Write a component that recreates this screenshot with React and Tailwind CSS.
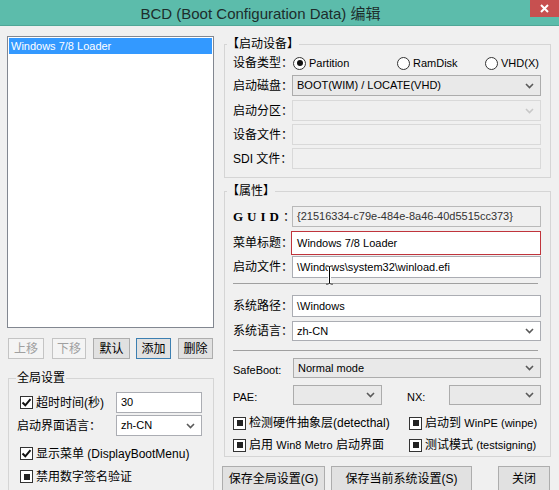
import React from "react";

function Chevron({ light }) {
  return (
    <svg width="9" height="6" viewBox="0 0 9 6" className="shrink-0">
      <path d="M1 1l3.5 3.5L8 1" fill="none" stroke={light ? "#c8c8c8" : "#5a5a5a"} strokeWidth="1.6" />
    </svg>
  );
}

function Check({ state }) {
  return (
    <div className="w-[13px] h-[13px] border border-[#333] bg-white flex items-center justify-center shrink-0">
      {state === "on" ? (
        <svg width="11" height="11" viewBox="0 0 11 11">
          <path d="M1.5 5.5l2.8 2.8L9.5 2.2" fill="none" stroke="#111" strokeWidth="2" />
        </svg>
      ) : (
        <div className="w-[6px] h-[6px] bg-[#222]" />
      )}
    </div>
  );
}

function Radio({ on }) {
  return (
    <div className="w-[13px] h-[13px] rounded-full border border-[#333] bg-white flex items-center justify-center shrink-0">
      {on && <div className="w-[6px] h-[6px] rounded-full bg-[#111]" />}
    </div>
  );
}

function Btn({ children, className, disabled, focus }) {
  const border = focus ? "border-[#3c7fb1]" : disabled ? "border-[#c4c4c4]" : "border-[#adadad]";
  const color = disabled ? "text-[#a0a0a0]" : "text-black";
  return (
    <div className={`${className} border ${border} ${color} ${disabled ? "bg-[#f4f4f4]" : "bg-[#e1e1e1]"} flex items-center justify-center`}>
      {children}
    </div>
  );
}

export default function App() {
  return (
    <div className="w-[559px] h-[490px] overflow-hidden bg-[#f0f0f0] text-black font-['Liberation_Sans','Noto_Sans_CJK_SC',sans-serif] text-[12px] leading-none whitespace-nowrap relative">
      {/* title bar */}
      <div className="h-[26px] bg-[#5cbcab] border-b border-[#4fa797] flex items-center justify-center pr-[38px] relative">
        <span className="text-[15px] text-[#1d2d2b] mt-[1px]">BCD (Boot Configuration Data) 编辑</span>
        <div className="absolute right-0 top-0 w-[29px] h-[17px] bg-[#c75050] flex items-center justify-center">
          <svg width="9" height="9" viewBox="0 0 9 9">
            <path d="M1 1l7 7M8 1l-7 7" stroke="#fff" strokeWidth="2" />
          </svg>
        </div>
      </div>

      <div className="flex">
        {/* left column */}
        <div className="w-[222px] shrink-0 pl-[7px] pt-[10px]">
          <div className="w-[207px] h-[292px] border border-[#828790] bg-white p-px">
            <div className="h-[16px] bg-[#3399ff] text-white text-[11px] flex items-center pl-[2px]">Windows 7/8 Loader</div>
          </div>

          <div className="flex mt-[10px] h-[21px]">
            <Btn className="ml-[1px] w-[36px]" disabled>上移</Btn>
            <Btn className="ml-[8px] w-[34px]" disabled>下移</Btn>
            <Btn className="ml-[7px] w-[37px]">默认</Btn>
            <Btn className="ml-[6px] w-[35px]" focus>添加</Btn>
            <Btn className="ml-[7px] w-[35px]">删除</Btn>
          </div>

          <fieldset className="ml-[1px] mt-[11px] w-[206px] h-[140px] border border-[#d5d5d5] pl-[11px] pt-[5px]">
            <legend className="ml-[-4px] leading-[17px] px-px">全局设置</legend>
            <div className="flex items-center h-[21px]">
              <div className="w-[96px] shrink-0 flex items-center gap-[3px]">
                <Check state="on" />
                <span>超时时间(秒)</span>
              </div>
              <div className="w-[86px] h-[21px] border border-[#abadb3] bg-white flex items-center pl-[4px] text-[11px]">30</div>
            </div>
            <div className="flex items-center h-[21px] mt-[2px]">
              <div className="w-[96px] shrink-0 ml-[-3px] mr-[3px]">启动界面语言：</div>
              <div className="w-[86px] h-[21px] border border-[#abadb3] bg-white flex items-center justify-between pl-[4px] pr-[6px] text-[11px]">
                <span>zh-CN</span>
                <Chevron />
              </div>
            </div>
            <div className="flex items-center h-[23px] mt-[6px] gap-[3px]">
              <Check state="on" />
              <span>显示菜单 (DisplayBootMenu)</span>
            </div>
            <div className="flex items-center h-[23px] gap-[3px]">
              <Check state="ind" />
              <span>禁用数字签名验证</span>
            </div>
          </fieldset>
        </div>

        {/* right column */}
        <div className="w-[337px]">
          <fieldset className="ml-[2px] mt-[10px] w-[327px] border border-[#d5d5d5] pl-[8px] pr-[9px] pb-[8px]">
            <legend className="ml-[-6px] leading-[17px]">【启动设备】</legend>
            <div className="flex items-center h-[20px]">
              <span className="w-[59px] shrink-0">设备类型：</span>
              <div className="ml-[1px] w-[104px] shrink-0 flex items-center gap-[3px]">
                <Radio on />
                <span className="text-[11px]">Partition</span>
              </div>
              <div className="w-[88px] shrink-0 flex items-center gap-[3px]">
                <Radio />
                <span className="text-[11px]">RamDisk</span>
              </div>
              <div className="flex items-center gap-[3px]">
                <Radio />
                <span className="text-[11px]">VHD(X)</span>
              </div>
            </div>
            <div className="flex items-center h-[21px] mt-[2px]">
              <span className="w-[59px] shrink-0">启动磁盘：</span>
              <div className="w-[249px] shrink-0 h-[21px] border border-[#acacac] bg-[#e9e9e9] flex items-center justify-between pl-[4px] pr-[6px] text-[11px]">
                <span>BOOT(WIM) / LOCATE(VHD)</span>
                <Chevron />
              </div>
            </div>
            <div className="flex items-center h-[21px] mt-[4px]">
              <span className="w-[59px] shrink-0">启动分区：</span>
              <div className="w-[249px] shrink-0 h-[21px] border border-[#d9d9d9] bg-[#efefef] flex items-center justify-end pr-[6px]">
                <Chevron light />
              </div>
            </div>
            <div className="flex items-center h-[21px] mt-[3px]">
              <span className="w-[59px] shrink-0">设备文件：</span>
              <div className="w-[249px] shrink-0 h-[21px] border border-[#d9d9d9] bg-[#f0f0f0]" />
            </div>
            <div className="flex items-center h-[21px] mt-[3px]">
              <span className="w-[59px] shrink-0">SDI 文件：</span>
              <div className="w-[249px] shrink-0 h-[21px] border border-[#d9d9d9] bg-[#f0f0f0]" />
            </div>
          </fieldset>

          <fieldset className="ml-[2px] mt-[5px] w-[327px] border border-[#d5d5d5] pl-[8px] pr-[9px] pb-[2px]">
            <legend className="ml-[-6px] leading-[17px]">【属性】</legend>
            <div className="flex items-center h-[21px] mt-[6px]">
              <span className="w-[59px] shrink-0 flex items-center">
                <span className="font-['Liberation_Serif'] font-bold text-[13px] tracking-[4px]">GUID</span>
                <span>：</span>
              </span>
              <div className="w-[249px] shrink-0 h-[21px] border border-[#b9b9b9] bg-[#f0f0f0] flex items-center pl-[4px] text-[11px] text-[#333]">
                {"{21516334-c79e-484e-8a46-40d5515cc373}"}
              </div>
            </div>
            <div className="flex items-center h-[24px] mt-[4px]">
              <span className="w-[58px] shrink-0">菜单标题：</span>
              <div className="w-[250px] shrink-0 h-[24px] border border-[#c0343c] bg-white flex items-center pl-[5px] text-[11px]">Windows 7/8 Loader</div>
            </div>
            <div className="flex items-center h-[22px] mt-px">
              <span className="w-[59px] shrink-0">启动文件：</span>
              <div className="w-[249px] shrink-0 h-[22px] border border-[#abadb3] bg-white flex items-center pl-[4px] text-[11px]">
                {"\\Windows\\system32\\winload.efi"}
              </div>
            </div>
            <div className="h-px w-[305px] bg-[#a0a0a0] mt-[5px]" />
            <div className="flex items-center h-[22px] mt-[11px]">
              <span className="w-[59px] shrink-0">系统路径：</span>
              <div className="w-[249px] shrink-0 h-[22px] border border-[#abadb3] bg-white flex items-center pl-[4px] text-[11px]">{"\\Windows"}</div>
            </div>
            <div className="flex items-center h-[20px] mt-[4px]">
              <span className="w-[59px] shrink-0">系统语言：</span>
              <div className="w-[249px] shrink-0 h-[20px] border border-[#abadb3] bg-white flex items-center justify-between pl-[4px] pr-[6px] text-[11px]">
                <span>zh-CN</span>
                <Chevron />
              </div>
            </div>
            <div className="h-px w-[305px] bg-[#a0a0a0] mt-[9px]" />
            <div className="flex items-center h-[20px] mt-[7px]">
              <span className="w-[60px] shrink-0 text-[11px] mt-[4px]">SafeBoot:</span>
              <div className="w-[248px] shrink-0 h-[20px] border border-[#acacac] bg-[#e9e9e9] flex items-center justify-between pl-[4px] pr-[6px] text-[11px]">
                <span>Normal mode</span>
                <Chevron />
              </div>
            </div>
            <div className="flex items-center h-[20px] mt-[7px]">
              <span className="w-[60px] shrink-0 text-[11px] mt-[4px]">PAE:</span>
              <div className="w-[89px] shrink-0 h-[20px] border border-[#acacac] bg-[#e9e9e9] flex items-center justify-end pr-[6px]">
                <Chevron />
              </div>
              <span className="ml-[25px] w-[42px] shrink-0 text-[11px] mt-[4px]">NX:</span>
              <div className="w-[92px] shrink-0 h-[20px] border border-[#acacac] bg-[#e9e9e9] flex items-center justify-end pr-[6px]">
                <Chevron />
              </div>
            </div>
            <div className="flex items-center h-[18px] mt-[9px]">
              <div className="w-[176px] shrink-0 flex items-center gap-[3px]">
                <Check state="ind" />
                <span>检测硬件抽象层(detecthal)</span>
              </div>
              <div className="flex items-center gap-[3px]">
                <Check state="ind" />
                <span>启动到 <span className="text-[11px]">WinPE (winpe)</span></span>
              </div>
            </div>
            <div className="flex items-center h-[18px] mt-[4px]">
              <div className="w-[176px] shrink-0 flex items-center gap-[3px]">
                <Check state="ind" />
                <span>启用 <span className="text-[11px]">Win8 Metro</span> 启动界面</span>
              </div>
              <div className="flex items-center gap-[3px]">
                <Check state="ind" />
                <span>测试模式 <span className="text-[11px]">(testsigning)</span></span>
              </div>
            </div>
          </fieldset>

          <div className="flex mt-[9px]">
            <Btn className="w-[103px] h-[25px]">保存全局设置(G)</Btn>
            <Btn className="ml-[6px] w-[141px] h-[25px]">保存当前系统设置(S)</Btn>
            <Btn className="ml-[26px] w-[52px] h-[25px]">关闭</Btn>
          </div>
        </div>
      </div>

      {/* mouse cursor */}
      <svg width="9" height="20" viewBox="0 0 9 20" className="absolute left-[325px] top-[265px]">
        <path d="M1 1h2.5l1 1 1-1H8M4.5 2v16M1 19h2.5l1-1 1 1H8" fill="none" stroke="#fff" strokeWidth="3" />
        <path d="M1 1h2.5l1 1 1-1H8M4.5 2v16M1 19h2.5l1-1 1 1H8" fill="none" stroke="#000" strokeWidth="1" />
      </svg>
    </div>
  );
}
